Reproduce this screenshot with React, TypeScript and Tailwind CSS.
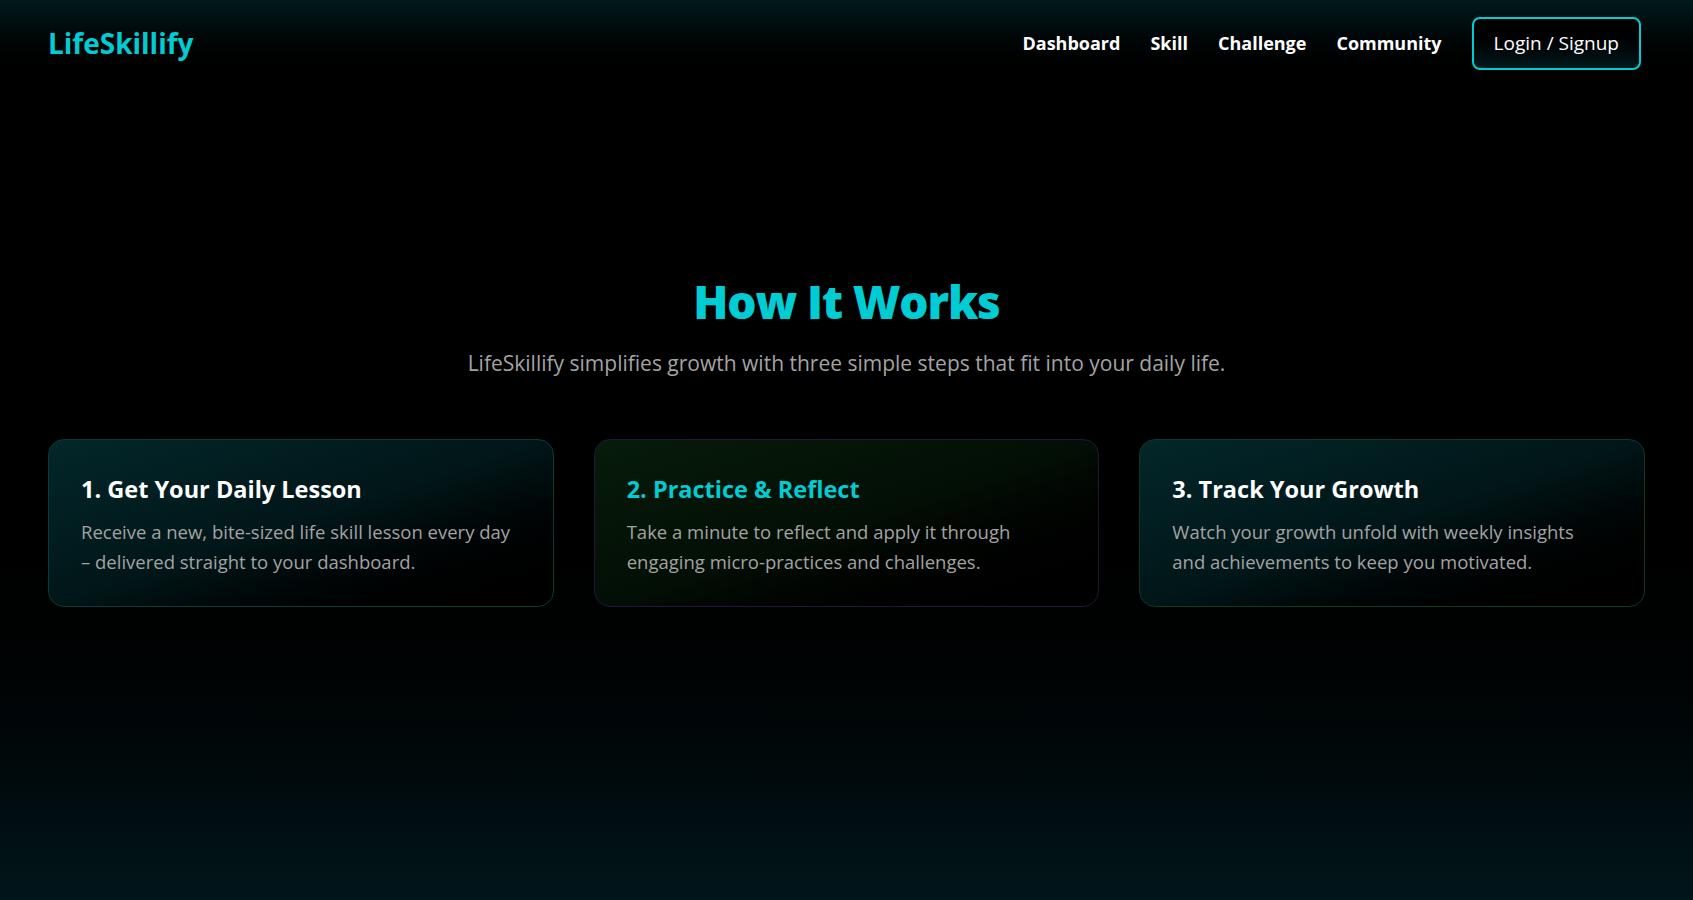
import React from 'react';

const steps = [
  {
    title: '1. Get Your Daily Lesson',
    text: 'Receive a new, bite-sized life skill lesson every day – delivered straight to your dashboard.',
    card: 'border-[#0c3a36] bg-gradient-to-br from-[#03272a] via-[#011618] to-[#000000]',
    titleColor: 'text-white',
  },
  {
    title: '2. Practice & Reflect',
    text: 'Take a minute to reflect and apply it through engaging micro-practices and challenges.',
    card: 'border-[#22163a] bg-gradient-to-br from-[#071c0a] via-[#030f05] to-[#000000]',
    titleColor: 'text-[#00cdd3]',
  },
  {
    title: '3. Track Your Growth',
    text: 'Watch your growth unfold with weekly insights and\u00a0achievements to keep you motivated.',
    card: 'border-[#0d3a22] bg-gradient-to-br from-[#03272a] via-[#011618] to-[#000000]',
    titleColor: 'text-white',
  },
];

export default function App() {
  return (
    <div
      className="min-h-screen bg-gradient-to-b from-[#000000] via-[#000000] to-[#01161a] text-white"
      style={{ fontFamily: '"Open Sans", sans-serif' }}
    >
      <nav className="h-[86px] flex items-center justify-between pl-12 pr-[52px] bg-gradient-to-b from-[#021a1d] to-[#000000]">
        <div className="text-[28px] font-bold text-[#00cdd3]">LifeSkillify</div>
        <div className="flex items-center gap-[30px]">
          <a className="text-lg font-bold">Dashboard</a>
          <a className="text-lg font-bold">Skill</a>
          <a className="text-lg font-bold">Challenge</a>
          <a className="text-lg font-bold">Community</a>
          <button className="h-[53px] px-[20px] rounded-lg border-2 border-[#00cdd3] text-[19px] bg-gradient-to-b from-[#000000] to-[#021a1d]">
            Login / Signup
          </button>
        </div>
      </nav>

      <section className="pt-[191px] px-12 pb-20 text-center">
        <h2 className="text-[46px] leading-[48px] font-extrabold tracking-tight text-[#00cdd3] mb-6">How It Works</h2>
        <p className="text-[21px] leading-7 text-[#a3a3a3] mb-[62px]">
          LifeSkillify simplifies growth with three simple steps that fit into your daily life.
        </p>
        <div className="grid grid-cols-3 gap-10 text-left">
          {steps.map((s) => (
            <div key={s.title} className={`rounded-2xl border px-8 pt-[32px] pb-[29px] ${s.card}`}>
              <h3 className={`text-[23.5px] font-bold mb-[10px] ${s.titleColor}`}>{s.title}</h3>
              <p className="text-[18.5px] leading-[30px] text-[#a3a3a3]">{s.text}</p>
            </div>
          ))}
        </div>
      </section>
    </div>
  );
}
